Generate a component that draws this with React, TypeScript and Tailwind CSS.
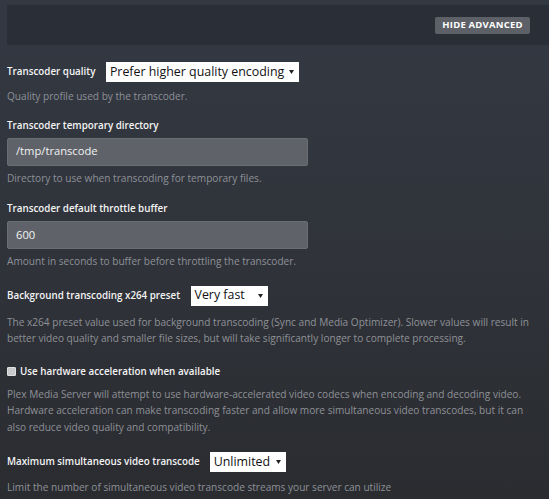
import React from "react"

function Select({ value, width }: { value: string; width: string }) {
  return (
    <div
      className={`flex shrink-0 items-center justify-between h-[20px] bg-white pl-[4px] pr-[5px] text-[#111] text-[12.4px] leading-none whitespace-nowrap ${width}`}
    >
      <span>{value}</span>
      <svg width="5" height="4" viewBox="0 0 5 4" className="ml-[3px]">
        <path d="M0 0 H5 L2.5 4 Z" fill="#222" />
      </svg>
    </div>
  )
}

function TextInput({ value }: { value: string }) {
  return (
    <div className="mt-[4px] h-[28px] w-[301px] rounded-[2px] border border-[#6a6e74] bg-[#5f6369] flex items-center px-[8px] text-[11.2px] text-[#f2f2f2]">
      {value}
    </div>
  )
}

function Label({ children, className = "" }: { children: React.ReactNode; className?: string }) {
  return (
    <span className={`text-[9.8px] font-semibold leading-[16px] text-[#f4f4f4] whitespace-nowrap ${className}`}>
      {children}
    </span>
  )
}

function Desc({ children, className = "" }: { children: React.ReactNode; className?: string }) {
  return <p className={`text-[10.1px] leading-[16.5px] text-[#8e9197] ${className}`}>{children}</p>
}

export default function App() {
  return (
    <div
      className="w-[549px] h-[499px] overflow-hidden bg-gradient-to-b from-[#333943] via-[#30333a] to-[#2a2c30]"
      style={{ fontFamily: '"Open Sans", "Liberation Sans", sans-serif' }}
    >
      {/* Top bar */}
      <div className="pt-[5px] pl-[7px]">
        <div className="h-[40px] bg-[#2a2e37] flex items-center justify-end pr-[19px]">
          <button className="h-[17px] w-[95px] rounded-[2px] bg-[#5d6067] text-white text-[9.5px] font-bold tracking-[0.2px]">
            HIDE ADVANCED
          </button>
        </div>
      </div>

      <div className="pl-[7px] pr-[10px]">
        {/* Transcoder quality */}
        <div className="mt-[17px] flex items-center gap-[10.5px]">
          <Label>Transcoder quality</Label>
          <Select value="Prefer higher quality encoding" width="w-[193px]" />
        </div>
        <Desc className="mt-[6px]">Quality profile used by the transcoder.</Desc>

        {/* Temporary directory */}
        <Label className="block mt-[13px]">Transcoder temporary directory</Label>
        <TextInput value="/tmp/transcode" />
        <Desc className="mt-[4px]">Directory to use when transcoding for temporary files.</Desc>

        {/* Throttle buffer */}
        <Label className="block mt-[15px]">Transcoder default throttle buffer</Label>
        <TextInput value="600" />
        <Desc className="mt-[4px]">Amount in seconds to buffer before throttling the transcoder.</Desc>

        {/* x264 preset */}
        <div className="mt-[16px] flex items-center gap-[10.5px]">
          <Label>Background transcoding x264 preset</Label>
          <Select value="Very fast" width="w-[77px]" />
        </div>
        <Desc className="mt-[8px]">
          The x264 preset value used for background transcoding (Sync and Media Optimizer). Slower values will result in
          better video quality and smaller file sizes, but will take significantly longer to complete processing.
        </Desc>

        {/* Hardware acceleration */}
        <label className="mt-[17px] flex items-center gap-[4px]">
          <span className="inline-block h-[9px] w-[9px] rounded-[1px] bg-[#c9cacc] border border-[#e0e0e0]" />
          <Label>Use hardware acceleration when available</Label>
        </label>
        <Desc className="mt-[6px]">
          Plex Media Server will attempt to use hardware-accelerated video codecs when encoding and decoding video.
          Hardware acceleration can make transcoding faster and allow more simultaneous video transcodes, but it can
          also reduce video quality and compatibility.
        </Desc>

        {/* Max simultaneous */}
        <div className="mt-[17px] flex items-center gap-[10px]">
          <Label>Maximum simultaneous video transcode</Label>
          <Select value="Unlimited" width="w-[76px]" />
        </div>
        <Desc className="mt-[7px]">Limit the number of simultaneous video transcode streams your server can utilize</Desc>
      </div>
    </div>
  )
}
